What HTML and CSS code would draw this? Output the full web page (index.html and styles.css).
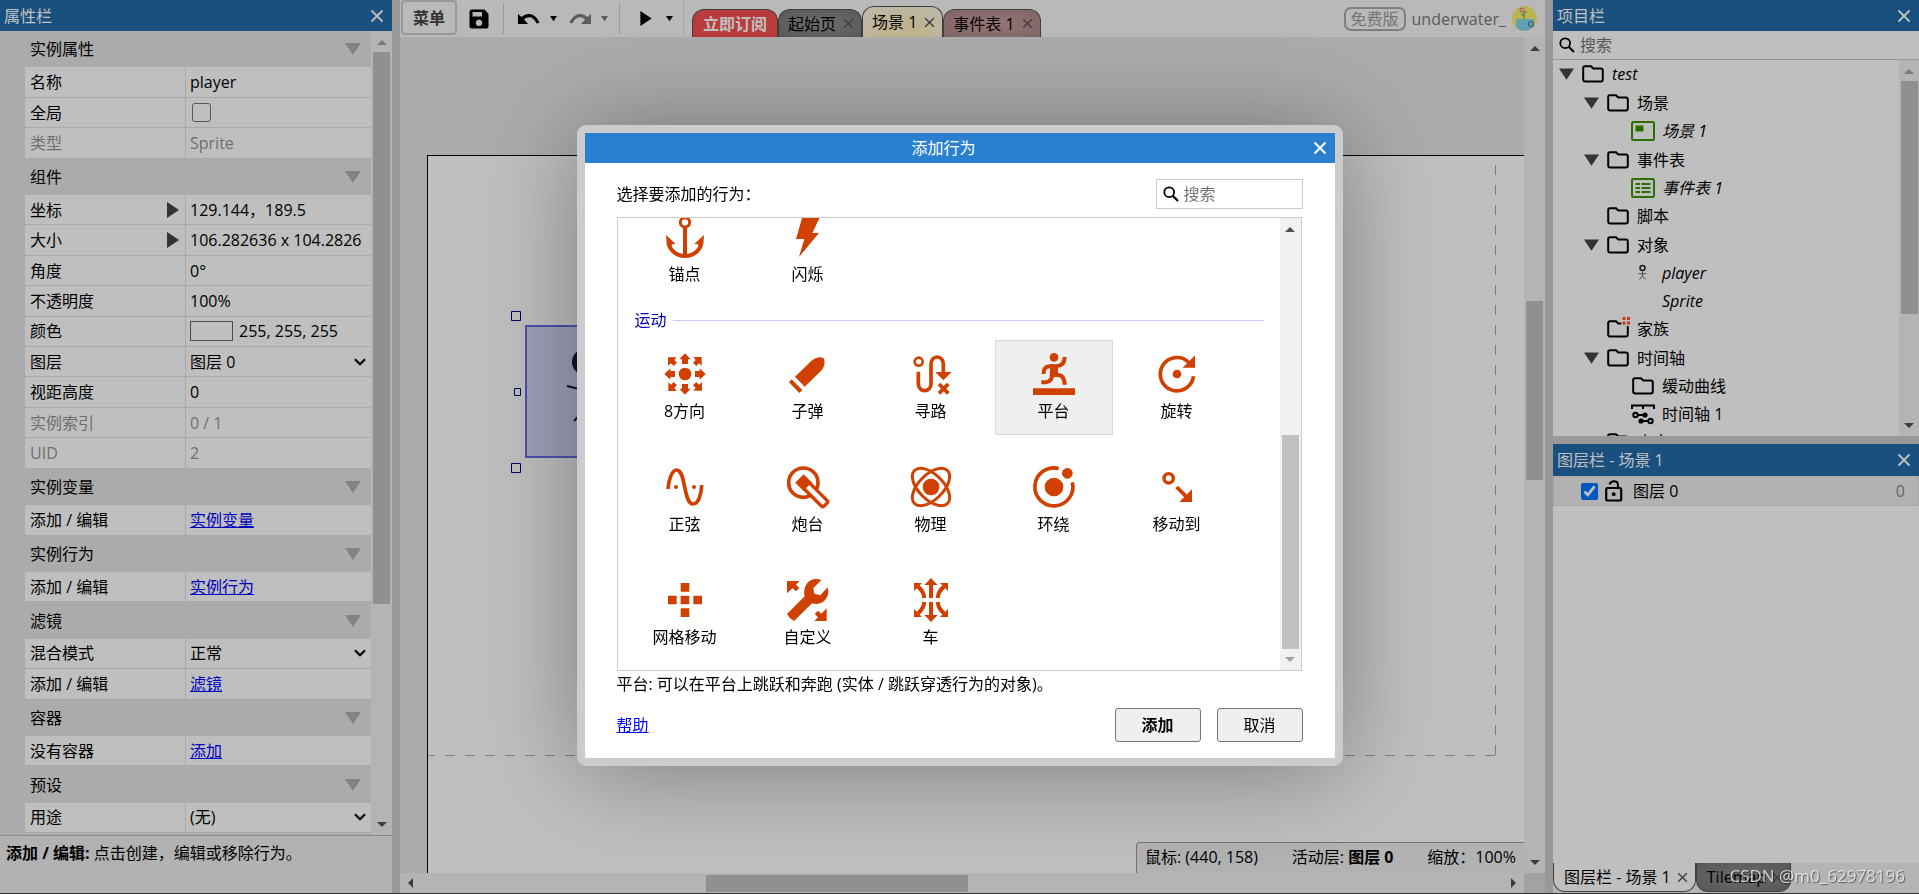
FILE: index.html
```html
<!DOCTYPE html>
<html lang="zh-CN">
<head>
    <meta charset="UTF-8">
    <meta name="viewport" content="width=device-width, initial-scale=1.0">
    <title>场景 1 - 添加行为</title>
    <link rel="stylesheet" href="styles.css">
</head>
<body>
    <!-- shared icons -->
    <svg class="defs" width="0" height="0">
        <symbol id="close" viewBox="0 0 14 14"><path d="M1.5 1.5l11 11M12.5 1.5l-11 11" fill="none" stroke="currentColor" stroke-width="1.8"/></symbol>
        <symbol id="down" viewBox="0 0 16 12"><path d="M0 0h16L8 12z" fill="currentColor"/></symbol>
        <symbol id="right" viewBox="0 0 12 16"><path d="M0 0v16l12-8z" fill="currentColor"/></symbol>
        <symbol id="chevron" viewBox="0 0 12 8"><path d="M1 1.2l5 5 5-5" fill="none" stroke="currentColor" stroke-width="2.2"/></symbol>
        <symbol id="search" viewBox="0 0 16 16"><circle cx="6.2" cy="6.2" r="4.9" fill="none" stroke="currentColor" stroke-width="1.8"/><path d="M9.5 9.5l5.5 5.5" stroke="currentColor" stroke-width="2.2"/></symbol>
        <symbol id="folder" viewBox="0 0 22 18"><path d="M1.2 3v11.500q0 2 2 2h15.600q2 0 2-2V5.500q0-2-2-2h-7.500L9 1.200H3q-1.800 0-1.800 1.800z" fill="none" stroke="#000" stroke-width="2"/></symbol>
    </svg>

    <div class="app">
        <section class="panel properties">
            <header class="titlebar"><h2>属性栏</h2><button aria-label="关闭"><svg width="14" height="14"><use href="#close"/></svg></button></header>
            <div class="scroll-area">
                <div class="prop-list">
                    <h3>实例属性<svg><use href="#down"/></svg></h3>
                    <div class="prop"><label for="p-name">名称</label><input id="p-name" type="text" value="player"></div>
                    <div class="prop"><label for="p-global">全局</label><span><input id="p-global" type="checkbox"></span></div>
                    <div class="prop off"><b>类型</b><span>Sprite</span></div>
                    <h3>组件<svg><use href="#down"/></svg></h3>
                    <div class="prop"><label for="p-pos">坐标<svg><use href="#right"/></svg></label><input id="p-pos" type="text" value="129.144，189.5"></div>
                    <div class="prop"><label for="p-size">大小<svg><use href="#right"/></svg></label><input id="p-size" type="text" value="106.282636 x 104.2826"></div>
                    <div class="prop"><label for="p-angle">角度</label><input id="p-angle" type="text" value="0°"></div>
                    <div class="prop"><label for="p-opacity">不透明度</label><input id="p-opacity" type="text" value="100%"></div>
                    <div class="prop"><label for="p-color">颜色</label><span class="color"><i></i><input id="p-color" type="text" value="255, 255, 255"></span></div>
                    <div class="prop"><label for="p-layer">图层</label><span class="select"><select id="p-layer"><option>图层 0</option></select><svg><use href="#chevron"/></svg></span></div>
                    <div class="prop"><label for="p-z">视距高度</label><input id="p-z" type="text" value="0"></div>
                    <div class="prop off"><b>实例索引</b><span>0 / 1</span></div>
                    <div class="prop off"><b>UID</b><span>2</span></div>
                    <h3>实例变量<svg><use href="#down"/></svg></h3>
                    <div class="prop"><b>添加 / 编辑</b><span><a href="#">实例变量</a></span></div>
                    <h3>实例行为<svg><use href="#down"/></svg></h3>
                    <div class="prop"><b>添加 / 编辑</b><span><a href="#">实例行为</a></span></div>
                    <h3>滤镜<svg><use href="#down"/></svg></h3>
                    <div class="prop"><label for="p-blend">混合模式</label><span class="select"><select id="p-blend"><option>正常</option></select><svg><use href="#chevron"/></svg></span></div>
                    <div class="prop"><b>添加 / 编辑</b><span><a href="#">滤镜</a></span></div>
                    <h3>容器<svg><use href="#down"/></svg></h3>
                    <div class="prop"><b>没有容器</b><span><a href="#">添加</a></span></div>
                    <h3>预设<svg><use href="#down"/></svg></h3>
                    <div class="prop"><label for="p-use">用途</label><span class="select"><select id="p-use"><option>(无)</option></select><svg><use href="#chevron"/></svg></span></div>
                </div>
                <div class="vscroll at-top"><i class="up"></i><i class="thumb"></i><i class="dn"></i></div>
            </div>
            <p class="hint"><strong>添加 / 编辑:</strong> 点击创建，编辑或移除行为。</p>
        </section>

        <div class="splitter"></div>

        <main class="editor">
            <div class="toolbar">
                <button class="menu-btn">菜单</button>
                <button class="tool save" aria-label="保存"><svg width="20" height="20" viewBox="0 0 20 20"><path fill-rule="evenodd" d="M3 .5h12.500L19.500 5v12.500q0 2-2 2H3q-2.500 0-2.500-2.500V3Q.5.500 3 .500zM3.500 3v4.500H13V3zM10 10.500a3.300 3.300 0 1 0 .01 0z"/></svg></button>
                <span class="sep"></span>
                <button class="tool undo" aria-label="撤销"><svg width="22" height="12" viewBox="0 0 22 12"><path d="M0 1l3.500 3C9-1 17-.5 21.500 9.500l-2.800 1C15 3 10 3 6 6.500L10 11H0z"/></svg></button>
                <button class="tool caret" aria-label="撤销列表"><svg width="7" height="7"><use href="#down"/></svg></button>
                <button class="tool redo" aria-label="重做"><svg width="22" height="12" viewBox="0 0 22 12"><path fill="#7d7d7d" d="M22 1l-3.500 3C13-1 5-.5.500 9.500l2.800 1C7 3 12 3 16 6.500L12 11h10z"/></svg></button>
                <button class="tool caret faded" aria-label="重做列表"><svg width="7" height="7"><use href="#down"/></svg></button>
                <span class="sep"></span>
                <button class="tool play" aria-label="预览"><svg width="12" height="15"><use href="#right"/></svg></button>
                <button class="tool caret" aria-label="预览选项"><svg width="7" height="7"><use href="#down"/></svg></button>
                <nav class="tabs">
                    <button class="tab red">立即订阅</button>
                    <button class="tab gray">起始页<svg><use href="#close"/></svg></button>
                    <button class="tab cream">场景 1<svg><use href="#close"/></svg></button>
                    <button class="tab rose">事件表 1<svg><use href="#close"/></svg></button>
                </nav>
                <div class="account">
                    <span class="badge">免费版</span>
                    <span class="user">underwater_</span>
                    <svg width="25" height="25" viewBox="0 0 25 25"><circle cx="12.500" cy="12.500" r="12.500" fill="#fbf06a"/><path d="M4 13h18v7q-4 5-9 5T4 21z" fill="#84d6ea"/><path d="M12 13V7l3-2M12 10l-3-2" fill="none" stroke="#4a9a8a"/><circle cx="10" cy="4" r="2" fill="none" stroke="#e0609a"/><circle cx="19" cy="18" r="2.500" fill="none" stroke="#60779a" stroke-width="1.200"/></svg>
                </div>
            </div>
            <div class="stage">
                <div class="canvas">
                    <div class="paper">
                        <svg class="bounds" width="1100" height="620"><path d="M-3 599.500H1068" /><path d="M1067.500 9V600"/></svg>
                        <svg class="sprite" width="150" height="165">
                            <rect x="15" y="15" width="136" height="131" fill="#d5d5f7" stroke="#6a6ae8" stroke-width="2"/>
                            <ellipse cx="74" cy="51" rx="13" ry="13" fill="#191932"/>
                            <path d="M56 75l20 5 22-6M76 64v32l-13 14M76 96l14 13" fill="none" stroke="#191932" stroke-width="2"/>
                            <path d="M.5.500h9v9h-9zM3.500 77.500h6v7h-6zM.5 152.500h9v9h-9z" fill="#fff" fill-opacity=".6" stroke="#000080"/>
                        </svg>
                    </div>
                    <div class="status"><span>鼠标: (440, 158)</span><span>活动层: <strong>图层 0</strong></span><span>缩放：100%</span></div>
                </div>
                <div class="vscroll stage-v"><i class="up"></i><i class="thumb"></i><i class="dn"></i></div>
                <div class="hscroll"><i class="lf"></i><i class="thumb"></i><i class="rt"></i></div>
                <div class="corner"></div>
            </div>
        </main>

        <div class="splitter"></div>

        <div class="side">
            <section class="panel project">
                <header class="titlebar"><h2>项目栏</h2><button aria-label="关闭"><svg width="14" height="14"><use href="#close"/></svg></button></header>
                <div class="tree-search"><svg width="16" height="16"><use href="#search"/></svg><input type="search" placeholder="搜索" aria-label="搜索项目"></div>
                <div class="scroll-area">
                    <ul class="tree">
                        <li class="row"><svg class="tw"><use href="#down"/></svg><svg class="ic"><use href="#folder"/></svg><em>test</em></li>
                        <li class="row l1 open"><svg class="tw"><use href="#down"/></svg><svg class="ic"><use href="#folder"/></svg>场景</li>
                        <li class="row l2"><svg class="ic" viewBox="0 0 22 18"><rect x="0" y="0" width="22" height="18" rx="1.500" fill="none" stroke="#3b9500" stroke-width="2"/><path d="M3.500 3.500h8v6h-8z" fill="#3b9500"/></svg><em>场景 1</em></li>
                        <li class="row l1 open"><svg class="tw"><use href="#down"/></svg><svg class="ic"><use href="#folder"/></svg>事件表</li>
                        <li class="row l2"><svg class="ic" viewBox="0 0 22 18"><rect x="0" y="0" width="22" height="18" rx="1.500" fill="none" stroke="#3b9500" stroke-width="2"/><path d="M3.500 5H8M9.500 5h9M3.500 9H8M9.500 9h9M3.500 13H8M9.500 13h9" stroke="#3b9500" stroke-width="2"/></svg><em>事件表 1</em></li>
                        <li class="row l1"><svg class="ic"><use href="#folder"/></svg>脚本</li>
                        <li class="row l1 open"><svg class="tw"><use href="#down"/></svg><svg class="ic"><use href="#folder"/></svg>对象</li>
                        <li class="row l2"><svg class="ic" viewBox="0 0 22 18"><circle cx="10.500" cy="4" r="2.500" fill="none" stroke="#222" stroke-width="1.500"/><path d="M6.500 9.500l4 .5 4-.5M10.500 6.500V12l-3 3.500M10.500 12l3 3.500" fill="none" stroke="#666"/></svg><em>player</em></li>
                        <li class="row l2"><i class="ic"></i><em>Sprite</em></li>
                        <li class="row l1"><svg class="ic" viewBox="0 0 22 18"><path d="M20.800 6v8.500q0 2-2 2H3.200q-2 0-2-2V3q0-1.800 1.800-1.800h6l2.300 2.300h3" fill="none" stroke="#000" stroke-width="2"/><path d="M15.500-3h3v3h-3zM20-3h3v3h-3zM15.500 1.500h3v3h-3zM20 1.500h3v3h-3z" fill="#f05a14"/></svg>家族</li>
                        <li class="row l1 open"><svg class="tw"><use href="#down"/></svg><svg class="ic"><use href="#folder"/></svg>时间轴</li>
                        <li class="row l2"><svg class="ic"><use href="#folder"/></svg>缓动曲线</li>
                        <li class="row l2"><svg class="ic" viewBox="0 0 22 18" fill="none" stroke="#000" stroke-width="2"><path d="M0 4V.5h22V4M11 0v4M5 10h8M10 16h7"/><circle cx="3.500" cy="10" r="2.200"/><circle cx="13" cy="10" r="1.600" fill="#000"/><circle cx="9" cy="16" r="1.600" fill="#000"/><circle cx="18.500" cy="16" r="2.200"/></svg>时间轴 1</li>
                        <li class="row l1"><svg class="ic"><use href="#folder"/></svg>声音</li>
                    </ul>
                    <div class="vscroll at-top tree-v"><i class="up"></i><i class="thumb"></i><i class="dn"></i></div>
                </div>
            </section>
            <section class="panel layers">
                <header class="titlebar"><h2>图层栏 - 场景 1</h2><button aria-label="关闭"><svg width="14" height="14"><use href="#close"/></svg></button></header>
                <div class="layer">
                    <input type="checkbox" id="layer0" checked>
                    <svg width="18" height="22" viewBox="0 0 18 22"><rect x="1.200" y="8" width="15" height="12.500" rx="1.500" fill="none" stroke="#000" stroke-width="2.200"/><path d="M4.500 4.500Q5.500 1.200 9 1.200q4 0 4 4V8" fill="none" stroke="#000" stroke-width="2"/><circle cx="8.700" cy="14.200" r="1.900"/></svg>
                    <label for="layer0">图层 0</label>
                    <span class="count">0</span>
                </div>
                <nav class="bottom-tabs">
                    <button class="on">图层栏 - 场景 1<svg><use href="#close"/></svg></button>
                    <button>Tilemap<svg><use href="#close"/></svg></button>
                </nav>
            </section>
        </div>
    </div>

    <div class="backdrop">
        <div class="dialog" role="dialog" aria-labelledby="dlg-title">
            <header class="dlg-title"><h1 id="dlg-title">添加行为</h1><button aria-label="关闭"><svg width="14" height="14"><use href="#close"/></svg></button></header>
            <div class="dlg-body">
                <div class="dlg-top">
                    <span>选择要添加的行为：</span>
                    <div class="dlg-search"><svg width="16" height="16"><use href="#search"/></svg><input type="search" placeholder="搜索" aria-label="搜索行为"></div>
                </div>
                <div class="picker">
                    <div class="items">
                        <div class="grid">
                            <button class="item"><svg viewBox="0 0 126 126"><g fill="none" stroke="#d04000" stroke-width="12"><circle cx="63" cy="19" r="14" stroke-width="9"/><path d="M63 32v86M13 74a50 46 0 0 0 100 0"/></g><path d="M6 57l29 27-11 1-4 15Q6 82 6 57zM120 57L91 84l11 1 4 15q14-18 14-43z"/></svg>锚点</button>
                            <button class="item"><svg viewBox="0 0 126 126"><path d="M48-4h54L76 51h20l-60 72 16-54H27z"/></svg>闪烁</button>
                        </div>
                        <h4>运动</h4>
                        <div class="grid">
                            <button class="item"><svg viewBox="0 0 126 126"><circle cx="63" cy="63" r="19"/><g id="q"><path d="M63 1l17 18h-8v14H54V19h-8z"/><path d="M12 13h26l-7 8 8 8-10 10-8-8-9 7z"/></g><use href="#q" transform="rotate(90 63 63)"/><use href="#q" transform="rotate(180 63 63)"/><use href="#q" transform="rotate(270 63 63)"/></svg>8方向</button>
                            <button class="item"><svg viewBox="0 0 126 126"><path d="M24 71l48-46c12-11 27-15 37-10 7 11 4 28-8 40l-48 46zM14 79l32 32-9 9L6 88z"/></svg>子弹</button>
                            <button class="item"><svg viewBox="0 0 126 126"><g fill="none" stroke="#d04000" stroke-width="11"><circle cx="26" cy="26" r="12" stroke-width="8"/><path d="M25 56v37a19 20 0 0 0 38 0V32a18.500 20 0 0 1 37 0v28M87 93l28 28M115 93l-28 28"/></g><path d="M76 57h49l-25 25z"/></svg>寻路</button>
                            <button class="item selected"><svg viewBox="0 0 126 126"><path d="M0 106h126v20H0z"/><circle cx="63" cy="13" r="13"/><path d="M52 34h23v34H50z"/><path d="M32 63v-4q0-17 18-19h14M70 40q25-1 25-28M58 60q0 27-20 28H25M62 66h14q19 2 19 29" fill="none" stroke="#d04000" stroke-width="12"/></svg>平台</button>
                            <button class="item"><svg viewBox="0 0 126 126"><circle cx="63" cy="63" r="13"/><path d="M112.500 70A50 50 0 1 1 98 28" fill="none" stroke="#d04000" stroke-width="11"/><path d="M117 7v37H80z"/></svg>旋转</button>
                            <button class="item"><svg viewBox="0 0 126 126"><path d="M12 69c2-29 12-57 26-57 28 0 20 102 49 102 17 0 25-30 26-57" fill="none" stroke="#d04000" stroke-width="11"/><circle cx="36" cy="63" r="6"/><circle cx="90" cy="63" r="6"/></svg>正弦</button>
                            <button class="item"><svg viewBox="0 0 126 126"><circle cx="49" cy="50" r="44" fill="none" stroke="#d04000" stroke-width="11"/><g transform="translate(50 50) rotate(45)"><path d="M-18-18h36v36h-36z"/><rect x="12" y="-12" width="81" height="24" rx="6" fill="#fff" stroke="#d04000" stroke-width="10"/></g></svg>炮台</button>
                            <button class="item"><svg viewBox="0 0 126 126"><circle cx="63" cy="63" r="25"/><g fill="none" stroke="#d04000" stroke-width="9"><ellipse cx="63" cy="63" rx="70" ry="37" transform="rotate(45 63 63)"/><ellipse cx="63" cy="63" rx="70" ry="37" transform="rotate(-45 63 63)"/></g></svg>物理</button>
                            <button class="item"><svg viewBox="0 0 126 126"><circle cx="63" cy="63" r="28"/><circle cx="103" cy="22" r="16"/><path d="M77 7.500A57 57 0 1 0 118 49" fill="none" stroke="#d04000" stroke-width="11"/></svg>环绕</button>
                            <button class="item"><svg viewBox="0 0 126 126"><path d="M62 63l34 34" stroke="#d04000" stroke-width="11"/><circle cx="38" cy="37" r="14" fill="none" stroke="#d04000" stroke-width="10"/><path d="M108 70v38H70z"/></svg>移动到</button>
                            <button class="item"><svg viewBox="0 0 126 126"><path d="M50 12h26v26H50zM50 50h26v26H50zM12 50h26v26H12zM88 50h26v26H88zM50 88h26v26H50z"/></svg>网格移动</button>
                            <button class="item"><svg viewBox="0 0 126 126"><path d="M0 6h37L27 17l10 10-10 10-10-10L0 43zM119 88v38H82l11-11-10-10 10-10 10 9zM0 105l53-53C48 30 58 0 88 0q8 0 15 4L79 27l3 17 18 5 22-24c8 24-8 50-34 50q-7 0-13-2l-54 53q-14-7-21-21z"/></svg>自定义</button>
                            <button class="item"><svg viewBox="0 0 126 126"><g id="car"><path d="M63-3l20 21H69v39H57V18H43z"/><path d="M43 57Q41 37 24 23M83 57q2-20 19-34" fill="none" stroke="#d04000" stroke-width="12"/><path d="M12 12h24L12 36zM114 12H90l24 24z"/></g><use href="#car" transform="matrix(1 0 0 -1 0 126)"/></svg>车</button>
                        </div>
                    </div>
                    <div class="vscroll at-end"><i class="up"></i><i class="thumb"></i><i class="dn"></i></div>
                </div>
                <p class="desc">平台: 可以在平台上跳跃和奔跑 (实体 / 跳跃穿透行为的对象)。</p>
                <footer class="dlg-foot"><a href="#">帮助</a><button class="primary">添加</button><button>取消</button></footer>
            </div>
        </div>
    </div>
    <div class="watermark">CSDN @m0_62978196</div>
</body>
</html>
```

FILE: styles.css
```css
* {
    box-sizing: border-box;
}

body {
    margin: 0;
    font: 16px/24px "Open Sans", "Noto Sans CJK SC", sans-serif;
    color: #000;
    background: #fff;
}

h1, h2, h3, h4, p, ul {
    margin: 0;
    padding: 0;
    font-size: 16px;
    font-weight: normal;
}

button, input, select {
    font: inherit;
    color: inherit;
    margin: 0;
    padding: 0;
    border: 0;
    background: none;
    border-radius: 0;
}

input:focus {
    outline: none;
}

button {
    cursor: pointer;
}

svg {
    display: block;
    flex: none;
    overflow: visible;
}

.defs {
    position: absolute;
}

.app {
    display: flex;
    height: 100vh;
    border-bottom: 1px solid #444;
    overflow: hidden;
}

.splitter {
    flex: none;
    width: 8px;
    background: #ccc;
}

/* panels */
.panel {
    display: flex;
    flex-direction: column;
    min-height: 0;
}

.titlebar {
    flex: none;
    display: flex;
    align-items: center;
    justify-content: space-between;
    height: 31px;
    padding: 0 8px 0 4px;
    color: #fff;
    background: #236ba8;
}

.scroll-area {
    flex: 1;
    display: flex;
    min-height: 0;
}

.properties {
    flex: none;
    width: 392px;
    background: #e5e5e5;
}

.prop-list {
    flex: 1;
    display: flex;
    flex-direction: column;
    min-width: 0;
    padding: 0 0 2px 25px;
    overflow: hidden;
}

.prop-list h3 {
    flex: 1 0 36px;
    display: flex;
    align-items: center;
    justify-content: space-between;
    padding: 0 10px 0 5px;
}

.prop-list h3 svg {
    width: 16px;
    height: 12px;
    color: #afafaf;
}

.prop {
    flex: 1 0 30px;
    display: grid;
    grid-template-columns: 161px 1fr;
    background: #fff;
    border-bottom: 1px solid #e2e2e2;
}

.prop > * {
    display: flex;
    align-items: center;
    min-width: 0;
    padding-left: 4px;
    font-weight: normal;
}

.prop > :first-child {
    justify-content: space-between;
    padding: 0 6px 0 5px;
    border-right: 1px solid #e2e2e2;
}

.prop label svg {
    width: 12px;
    height: 16px;
    color: #444;
}

.prop input[type="text"] {
    width: 100%;
}

.prop.off {
    color: #959595;
}

.prop input[type="checkbox"] {
    appearance: none;
    width: 19px;
    height: 19px;
    margin-left: 2px;
    border: 1px solid #767676;
    border-radius: 3px;
}

.color {
    gap: 6px;
}

.color i {
    flex: none;
    width: 43px;
    height: 20px;
    border: 1px solid #666;
}

.select {
    padding-right: 5px;
}

.select select {
    flex: 1;
    appearance: none;
}

.select svg {
    width: 12px;
    height: 8px;
}

a {
    color: #00f;
}

.hint {
    flex: none;
    height: 58px;
    padding: 5px 6px;
    background: #eee;
    border-top: 1px solid #bbb;
}

/* scrollbars */
.vscroll {
    flex: none;
    display: flex;
    flex-direction: column;
    align-items: center;
    justify-content: space-between;
    width: 21px;
    padding: 9px 0 8px;
    background: #f1f1f1;
}

.vscroll i, .hscroll i {
    flex: none;
}

.up, .dn {
    width: 0;
    height: 0;
    border: solid transparent;
    border-width: 0 5px;
}

.up {
    border-bottom: 5px solid #505050;
}

.dn {
    border-top: 5px solid #505050;
}

.thumb {
    width: 17px;
    background: #c1c1c1;
}

.at-top .up {
    border-bottom-color: #a3a3a3;
}

.at-top .thumb {
    height: 552px;
    margin: 7px 0 auto;
}

.tree-v.at-top .thumb {
    height: 233px;
}

.stage-v .thumb {
    height: 179px;
    margin: 250px 0 auto;
}

.at-end .thumb {
    height: 214px;
    margin: auto 0 8px;
}

.at-end .dn {
    border-top-color: #a3a3a3;
}

.hscroll {
    display: flex;
    align-items: center;
    justify-content: space-between;
    padding: 0 8px;
    background: #f1f1f1;
}

.hscroll .thumb {
    width: 262px;
    height: 17px;
    margin: 0 auto 0 293px;
}

.lf, .rt {
    border: solid transparent;
    border-width: 5px 0;
}

.lf {
    border-right: 5px solid #505050;
}

.rt {
    border-left: 5px solid #505050;
}

/* toolbar */
.editor {
    flex: 1;
    display: flex;
    flex-direction: column;
    min-width: 0;
}

.toolbar {
    flex: none;
    display: flex;
    align-items: center;
    height: 37px;
    background: #f7f7f7;
}

.menu-btn {
    align-self: flex-start;
    width: 56px;
    height: 35px;
    margin-left: 1px;
    font-weight: bold;
    color: #444;
    border: 2px solid #ccc;
    border-radius: 4px;
}

.save {
    margin: 0 14px 0 12px;
}

.sep {
    width: 1px;
    height: 31px;
    background: #d0d0d0;
}

.undo {
    margin: 0 10px 0 14px;
}

.redo {
    margin: 0 10px 0 12px;
}

.faded {
    margin-right: 11px;
    color: #7d7d7d;
}

.play {
    margin: 0 14px 0 20px;
}

.tabs {
    align-self: stretch;
    display: flex;
    align-items: flex-end;
    margin-left: 10px;
    padding-left: 8px;
    border-left: 1px solid #ddd;
}

.tab {
    display: flex;
    align-items: center;
    gap: 7px;
    height: 28px;
    padding: 0 7px 0 9px;
    border: 1px solid #555;
    border-bottom: 0;
    border-radius: 12px 12px 0 0;
}

.tab svg {
    width: 11px;
    height: 11px;
    color: #555;
}

.red {
    padding: 0 10px;
    font-weight: bold;
    color: #fff;
    background: #f7504e;
}

.gray {
    background: radial-gradient(#949494, #747474);
}

.cream {
    height: 31px;
    background: radial-gradient(at 50% 100%, #ffefc3 40%, #fdf8e8);
}

.rose {
    background: radial-gradient(#cb9d9e, #a88889);
}

.account {
    display: flex;
    align-items: center;
    gap: 6px;
    margin-left: auto;
    padding-right: 8px;
    color: #7a7a7a;
}

.badge {
    padding: 0 5px;
    line-height: 20px;
    color: #999;
    border: 2px solid #aaa;
    border-radius: 7px;
}

/* stage */
.stage {
    flex: 1;
    display: grid;
    grid-template: minmax(0, 1fr) 20px / minmax(0, 1fr) 21px;
    min-height: 0;
}

.canvas {
    position: relative;
    overflow: hidden;
    background: #e5e5e5;
}

.paper {
    position: absolute;
    inset: 118px 0 0 27px;
    background: #fff;
    border: solid #000;
    border-width: 1px 0 0 1px;
}

.bounds {
    position: absolute;
    left: 0;
    top: 0;
    overflow: hidden;
    fill: none;
    stroke: #aaa;
    stroke-dasharray: 10;
}

.sprite {
    position: absolute;
    left: 83px;
    top: 155px;
}

.status {
    position: absolute;
    right: 0;
    bottom: 0;
    display: flex;
    justify-content: space-between;
    width: 388px;
    height: 31px;
    padding: 2px 8px;
    background: #eee;
    border: solid #999;
    border-width: 1px 0 0 1px;
    border-radius: 4px 0 0 0;
}

.corner {
    background: #d8d8d8;
}

/* right side */
.side {
    flex: none;
    display: flex;
    flex-direction: column;
    width: 366px;
}

.project {
    flex: none;
    height: 436px;
}

.tree-search {
    display: flex;
    align-items: center;
    gap: 5px;
    height: 29px;
    padding: 0 6px;
    border-bottom: 1px solid #ccc;
}

input[type="search"] {
    flex: 1;
    min-width: 0;
    appearance: none;
}

input::placeholder {
    color: #757575;
    opacity: 1;
}

.tree {
    flex: 1;
    overflow: hidden;
    list-style: none;
}

.row {
    display: flex;
    align-items: center;
    justify-content: flex-start;
    height: 28px;
    padding-left: 29px;
}

.l1 {
    padding-left: 54px;
}

.l2 {
    padding-left: 79px;
}

.open {
    margin-top: 1px;
}

.tw {
    width: 15px;
    height: 12px;
    margin: 0 8px 0 -23px;
    color: #444;
}

.ic {
    flex: none;
    width: 22px;
    height: 18px;
    margin-right: 8px;
}

.tree-v {
    width: 20px;
}

.layers {
    flex: 1;
    border-top: 8px solid #ccc;
}

.layers .titlebar {
    height: 32px;
}

.layer {
    display: flex;
    align-items: center;
    height: 30px;
    padding: 0 13px 0 27px;
    background: #eee;
    border: 1px solid #e0e0e0;
}

.layer input {
    width: 17px;
    height: 17px;
    margin-right: 7px;
}

.layer label {
    flex: 1;
    margin-left: 10px;
}

.count {
    color: #888;
}

.bottom-tabs {
    display: flex;
    height: 30px;
    margin-top: auto;
    background: #f1f1f1;
}

.bottom-tabs button {
    display: flex;
    align-items: center;
    gap: 6px;
    height: 29px;
    padding: 0 7px 0 10px;
    border: 1px solid #555;
    border-top: 0;
    border-radius: 0 0 12px 12px;
    background: radial-gradient(#909090, #747474);
}

.bottom-tabs .on {
    background: #fff;
}

.bottom-tabs svg {
    width: 11px;
    height: 11px;
    color: #555;
}

/* dialog */
.backdrop {
    position: fixed;
    inset: 0;
    display: flex;
    align-items: center;
    justify-content: center;
    padding-bottom: 3px;
    background: rgba(0, 0, 0, 0.25);
}

.dialog {
    width: 766px;
    border: 8px solid #ccc;
    border-radius: 9px;
    background: #fff;
    box-shadow: 0 5px 100px rgba(0, 0, 0, 0.35);
}

.dlg-title {
    display: flex;
    align-items: center;
    height: 30px;
    padding-right: 8px;
    color: #fff;
    background: #2a80ce;
}

.dlg-title h1 {
    flex: 1;
    padding-right: 10px;
    text-align: center;
}

.dlg-body {
    padding: 16px 32px;
}

.dlg-top {
    display: flex;
    justify-content: space-between;
    align-items: center;
}

.dlg-search {
    display: flex;
    align-items: center;
    gap: 5px;
    width: 147px;
    height: 30px;
    padding: 0 6px;
    border: 1px solid #ccc;
}

.picker {
    display: flex;
    height: 454px;
    margin: 8px 1px 0 0;
    border: 1px solid #ccc;
}

/* list stays scrolled to its end */
.items {
    flex: 1;
    display: flex;
    flex-direction: column;
    justify-content: flex-end;
    padding: 0 0 9px 8px;
    overflow: hidden;
}

.grid {
    display: grid;
    grid-template-columns: repeat(5, 118px);
    gap: 18px 5px;
}

.item {
    display: flex;
    flex-direction: column;
    align-items: center;
    gap: 4px;
    height: 95px;
    padding-top: 12px;
    border: 1px solid transparent;
}

.item svg {
    width: 42px;
    height: 42px;
    fill: #d04000;
}

.selected {
    background: #efefef;
    border-color: #dadada;
}

.items h4 {
    display: flex;
    align-items: center;
    gap: 6px;
    height: 25px;
    margin: 10px 16px 8px 9px;
    color: #0000a8;
}

.items h4::after {
    content: "";
    flex: 1;
    height: 1px;
    background: #ccccff;
}

.desc {
    height: 37px;
    padding-top: 1px;
}

.dlg-foot {
    display: flex;
    align-items: center;
    gap: 16px;
}

.dlg-foot a {
    margin-right: auto;
}

.dlg-foot button {
    width: 86px;
    height: 34px;
    border: 1px solid #767676;
    border-radius: 3px;
    background: #efefef;
}

.dlg-foot .primary {
    font-weight: bold;
}

.watermark {
    position: fixed;
    right: 14px;
    bottom: 6px;
    font-size: 17px;
    color: rgba(240, 240, 240, 0.8);
    text-shadow: 1px 1px 1px rgba(0, 0, 0, 0.5);
}
```
